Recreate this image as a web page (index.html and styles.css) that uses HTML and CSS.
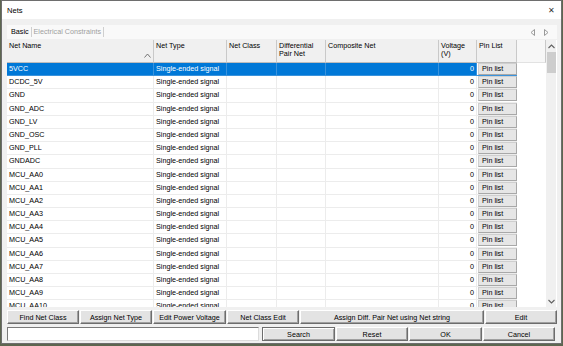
FILE: index.html
```html
<!DOCTYPE html>
<html lang="en">
<head>
    <meta charset="UTF-8">
    <title>Nets</title>
    <link rel="stylesheet" href="styles.css">
</head>
<body>
    <div class="window">
        <div class="titlebar">
            <span class="title">Nets</span>
            <span class="close">✕</span>
        </div>

        <div class="main">
            <div class="tabs">
                <span class="tab active">Basic</span>
                <span class="tab">Electrical Constraints</span>
                <span class="tab-arrows">
                    <svg width="6" height="7" viewBox="0 0 6 7"><path d="M4.5 0.5 L1 3.5 L4.5 6.5 Z" fill="none" stroke="#9a9a9a" stroke-width="1"/></svg>
                    <svg width="6" height="7" viewBox="0 0 6 7"><path d="M1.5 0.5 L5 3.5 L1.5 6.5 Z" fill="none" stroke="#9a9a9a" stroke-width="1"/></svg>
                </span>
            </div>

            <div class="grid">
                <div class="grid-body">
                    <div class="row head">
                        <div class="cell">Net Name
                            <svg class="sort" width="7" height="5" viewBox="0 0 7 5"><path d="M0.5 4.5 L3.5 1 L6.5 4.5" fill="none" stroke="#666" stroke-width="0.9"/></svg>
                        </div>
                        <div class="cell">Net Type</div>
                        <div class="cell">Net Class</div>
                        <div class="cell">Differential<br>Pair Net</div>
                        <div class="cell">Composite Net</div>
                        <div class="cell">Voltage<br>(V)</div>
                        <div class="cell">Pin List</div>
                        <div class="cell empty"></div>
                    </div>
                    <div id="rows"></div>
                </div>
                <div class="scrollbar">
                    <svg class="sb-arrow" width="7" height="5" viewBox="0 0 7 5"><path d="M0.5 4 L3.5 1 L6.5 4" fill="none" stroke="#606060" stroke-width="1.1"/></svg>
                    <div class="thumb"></div>
                    <div class="track"></div>
                    <svg class="sb-arrow" width="7" height="5" viewBox="0 0 7 5"><path d="M0.5 1 L3.5 4 L6.5 1" fill="none" stroke="#606060" stroke-width="1.1"/></svg>
                </div>
            </div>

            <div class="actions">
                <button class="btn w72">Find Net Class</button>
                <button class="btn w72">Assign Net Type</button>
                <button class="btn w73">Edit Power Voltage</button>
                <button class="btn w72">Net Class Edit</button>
                <button class="btn grow">Assign Diff. Pair Net using Net string</button>
                <button class="btn w72">Edit</button>
            </div>

            <div class="actions">
                <input class="search-input" type="text">
                <button class="btn default w73">Search</button>
                <button class="btn w72">Reset</button>
                <button class="btn w73">OK</button>
                <button class="btn w72">Cancel</button>
            </div>
        </div>
    </div>

    <script src="app.js"></script>
</body>
</html>
```

FILE: styles.css
```css
* {
    margin: 0;
    padding: 0;
    box-sizing: border-box;
}

body {
    font-family: "Liberation Sans", Arial, sans-serif;
    font-size: 7.2px;
    color: #000;
    background: #5d6650;
    width: 563px;
    height: 346px;
    overflow: hidden;
}

.window {
    width: 561px;
    height: 344px;
    margin-left: 1px;
    border: 1px solid #6e6e6e;
    background: #f0f0f0;
    display: flex;
    flex-direction: column;
}

.titlebar {
    height: 18px;
    background: #fff;
    display: flex;
    align-items: center;
    justify-content: space-between;
    padding: 0 6px 0 5px;
}

.title {
    font-size: 7.6px;
}

.close {
    font-size: 8px;
    color: #333;
}

.main {
    padding: 0 4px 0 5px;
    display: flex;
    flex-direction: column;
}

/* Tabs */
.tabs {
    margin-top: 6px;
    height: 14px;
    background: #f9f9f9;
    display: flex;
    align-items: center;
    padding-left: 2px;
}

.tab {
    color: #a0a0a0;
    padding: 0 2px;
    border-right: 1px solid #cfcfcf;
    line-height: 10px;
}

.tab.active {
    color: #000;
}

.tab-arrows {
    margin-left: auto;
    display: flex;
    gap: 7px;
    padding-right: 8px;
}

/* Grid */
.grid {
    margin-top: 1px;
    height: 267px;
    display: flex;
    background: #fff;
    overflow: hidden;
}

.grid-body {
    width: 539px;
}

.row {
    display: grid;
    grid-template-columns: 147px 73px 50px 49px 113px 38px 40px 29px;
    height: 13.2px;
}

.row .cell {
    border-right: 1px solid #ececec;
    border-bottom: 1px solid #ececec;
    padding-left: 2px;
    line-height: 12px;
    white-space: nowrap;
    overflow: hidden;
}

.row .cell.num {
    text-align: right;
    padding-right: 2px;
}

.row .cell.pins {
    padding: 0 0 1px 1px;
    border-right: none;
}

.row .cell.empty {
    border: none;
    background: #fff;
}

.row.selected .cell {
    background: #0078d7;
    color: #fff;
    border-color: #3a93dc;
}

.row.selected .cell.pins,
.row.selected .cell.empty {
    background: #fff;
    color: #000;
}

.pin-btn {
    display: block;
    width: 39px;
    height: 12px;
    background: #e6e6e6;
    border: 1px solid #cfcfcf;
    border-right-color: #a8a8a8;
    border-bottom-color: #a8a8a8;
    line-height: 10px;
    padding-left: 3px;
}

.row.head {
    height: 23px;
    background: #f0f0f0;
}

.row.head .cell {
    position: relative;
    border-right: 1px solid #c9c9c9;
    border-bottom: 1px solid #bdbdbd;
    line-height: 8px;
    padding-top: 2px;
    background: #f0f0f0;
}

.row.head .cell.empty {
    background: #f7f7f7;
    border-bottom: 1px solid #e2e2e2;
}

.sort {
    position: absolute;
    right: 2px;
    top: 13px;
}

/* Scrollbar */
.scrollbar {
    width: 10px;
    background: #f0f0f0;
    display: flex;
    flex-direction: column;
    align-items: center;
}

.sb-arrow {
    margin: 4px 0 3px;
}

.thumb {
    width: 9px;
    height: 21px;
    background: #cdcdcd;
}

.track {
    flex: 1;
}

/* Buttons */
.actions {
    display: flex;
    gap: 1px;
    margin-top: 3px;
    height: 14px;
}

.actions + .actions {
    margin-top: 3px;
}

.btn {
    font-family: inherit;
    font-size: 7.2px;
    background: #e3e3e3;
    border: 1px solid #fff;
    border-right-color: #6d6d6d;
    border-bottom-color: #6d6d6d;
    box-shadow: inset -1px -1px 0 #a0a0a0;
    color: #000;
    height: 14px;
}

.btn.default {
    border: 1px solid #6d6d6d;
    box-shadow: inset 1px 1px 0 #fff, inset -1px -1px 0 #a0a0a0;
}

.w72 { width: 72px; }
.w73 { width: 73px; }

.btn.grow {
    flex: 1;
}

.search-input {
    width: 252px;
    height: 14px;
    margin-right: 2px;
    background: #fff;
    border: 1px solid #7a7a7a;
    border-right-color: #dcdcdc;
    border-bottom-color: #dcdcdc;
}
```

FILE: app.js
```js
const nets = ['5VCC', 'DCDC_5V', 'GND', 'GND_ADC', 'GND_LV', 'GND_OSC', 'GND_PLL', 'GNDADC'];
for (let i = 0; i <= 10; i++) nets.push('MCU_AA' + i);

const rows = document.getElementById('rows');

nets.forEach((name, i) => {
    const row = document.createElement('div');
    row.className = 'row' + (i === 0 ? ' selected' : '');
    row.innerHTML =
        '<div class="cell">' + name + '</div>' +
        '<div class="cell">Single-ended signal</div>' +
        '<div class="cell"></div>' +
        '<div class="cell"></div>' +
        '<div class="cell"></div>' +
        '<div class="cell num">0</div>' +
        '<div class="cell pins"><span class="pin-btn">Pin list</span></div>' +
        '<div class="cell empty"></div>';
    rows.appendChild(row);
});
```
